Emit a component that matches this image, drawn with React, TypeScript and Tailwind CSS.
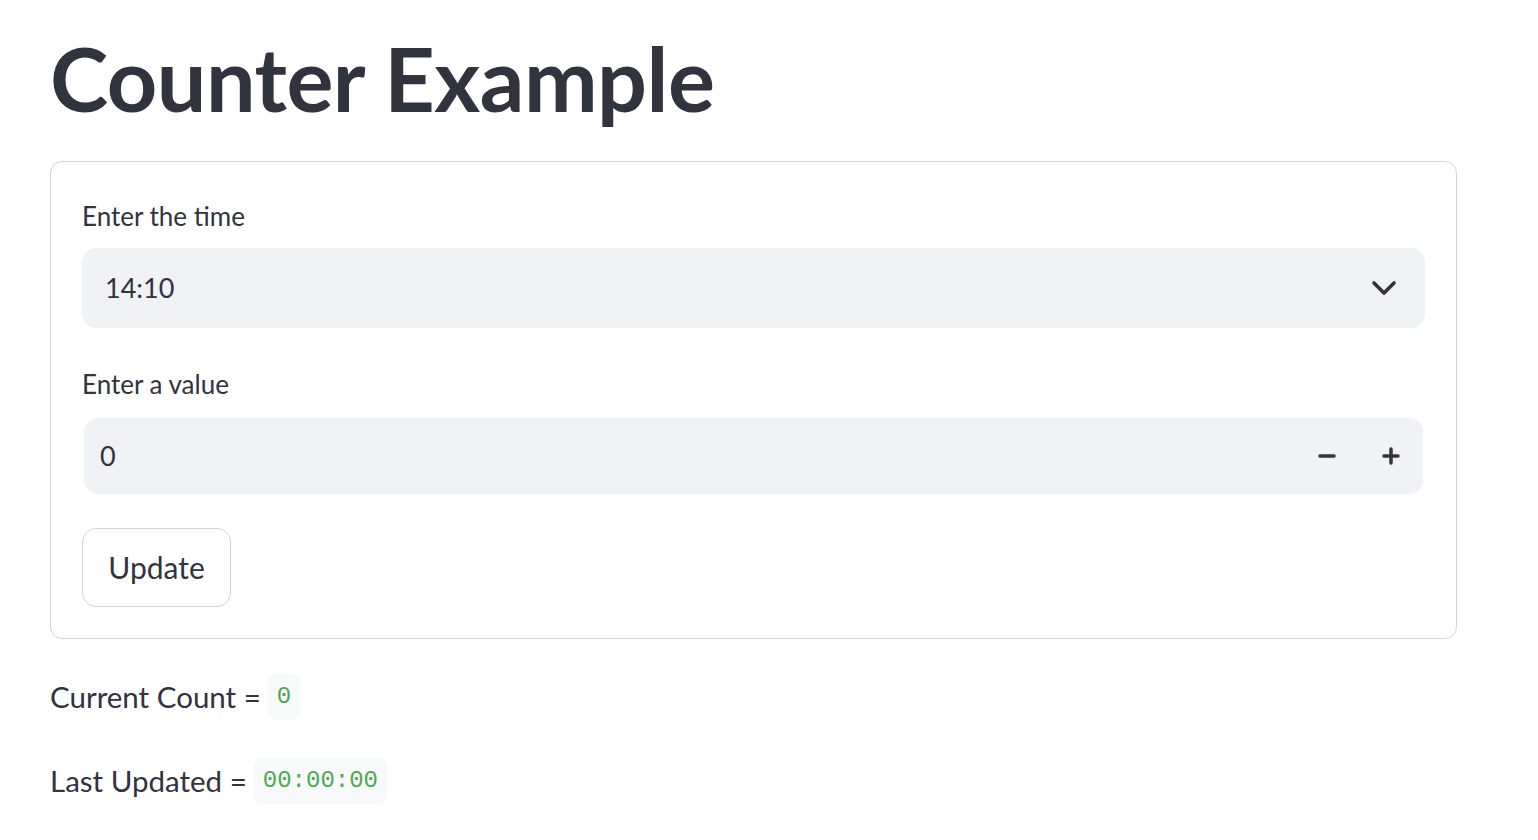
import { ChevronDown, Minus, Plus } from 'lucide-react';

export default function App() {
  return (
    <div className="min-h-screen bg-white px-[50px] pt-[28px] text-[#31333F] font-['Lato','Noto_Sans',sans-serif]">
      {/* Title */}
      <h1 className="text-[88px] font-bold leading-[100px] tracking-[-0.5px]">Counter Example</h1>

      {/* Form card */}
      <div className="mt-[33px] w-[1407px] rounded-xl border border-[#d3d3d7] px-[31px] pt-[32px] pb-[31px]">
        <label className="flex h-[44px] items-center text-[26px]">Enter the time</label>
        <div className="mt-[10px] flex h-[80px] items-center justify-between rounded-[14px] bg-[#f0f2f6] pl-[23px] pr-[21px]">
          <span className="text-[27px]">14:10</span>
          <ChevronDown className="h-[40px] w-[40px] text-[#31333F]" strokeWidth={2.2} />
        </div>

        <label className="mt-[34px] flex h-[44px] items-center text-[26px]">Enter a value</label>
        <div className="mx-[2px] mt-[12px] flex h-[76px] items-center justify-between rounded-[14px] bg-[#f0f2f6] pl-[16px] pr-[20px]">
          <span className="text-[27px]">0</span>
          <div className="flex items-center gap-[40px]">
            <Minus className="h-[24px] w-[24px]" strokeWidth={3.5} />
            <Plus className="h-[24px] w-[24px]" strokeWidth={3.5} />
          </div>
        </div>

        <button className="mt-[34px] flex h-[79px] w-[149px] items-center justify-center rounded-[14px] border-[1.5px] border-[#d3d3d7] bg-white text-[30px]">
          Update
        </button>
      </div>

      {/* Output */}
      <div className="mt-[35px] flex items-center text-[29.5px]">
        <span>Current Count =</span>
        <code className="ml-[7px] rounded-[8px] bg-[#f8f9fb] px-[9px] py-[5px] text-[24px] text-[#4aab4e] font-['Liberation_Mono',monospace]">0</code>
      </div>
      <div className="mt-[38px] flex items-center text-[29.5px]">
        <span>Last Updated =</span>
        <code className="ml-[7px] rounded-[8px] bg-[#f8f9fb] px-[9px] py-[5px] text-[24px] text-[#4aab4e] font-['Liberation_Mono',monospace]">00:00:00</code>
      </div>
    </div>
  );
}
